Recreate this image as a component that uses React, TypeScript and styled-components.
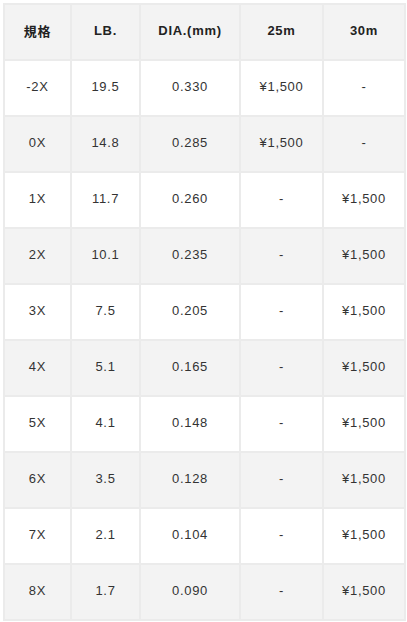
import styled, { createGlobalStyle } from 'styled-components';

const Global = createGlobalStyle`
  body {
    margin: 0;
    background: #fff;
    font-family: 'Liberation Sans', Arial, 'Noto Sans CJK JP', sans-serif;
  }
`;

const Wrapper = styled.div`
  padding: 3px;
`;

const Table = styled.table`
  border-collapse: separate;
  border-spacing: 2px;
  background-color: #ebebeb;
  table-layout: fixed;
  width: 403px;
  color: #333;
  font-size: 13px;
  letter-spacing: 0.7px;
`;

const Row = styled.tr<{ $shade: boolean }>`
  background-color: ${(p) => (p.$shade ? '#f3f3f3' : '#ffffff')};
`;

const HeadCell = styled.th`
  height: 50px;
  padding: 0 0 4px;
  text-align: center;
  vertical-align: middle;
  font-weight: bold;
  color: #222;
`;

const Cell = styled.td`
  height: 50px;
  padding: 0 0 4px;
  text-align: center;
  vertical-align: middle;
`;

const widths = [65, 67, 98, 81, 80];
const heads = ['規格', 'LB.', 'DIA.(mm)', '25m', '30m'];

const rows = [
  ['-2X', '19.5', '0.330', '¥1,500', '-'],
  ['0X', '14.8', '0.285', '¥1,500', '-'],
  ['1X', '11.7', '0.260', '-', '¥1,500'],
  ['2X', '10.1', '0.235', '-', '¥1,500'],
  ['3X', '7.5', '0.205', '-', '¥1,500'],
  ['4X', '5.1', '0.165', '-', '¥1,500'],
  ['5X', '4.1', '0.148', '-', '¥1,500'],
  ['6X', '3.5', '0.128', '-', '¥1,500'],
  ['7X', '2.1', '0.104', '-', '¥1,500'],
  ['8X', '1.7', '0.090', '-', '¥1,500'],
];

function App() {
  return (
    <Wrapper>
      <Global />
      <Table>
        <colgroup>
          {widths.map((w, i) => (
            <col key={i} style={{ width: w }} />
          ))}
        </colgroup>
        <thead>
          <Row $shade={true}>
            {heads.map((h) => (
              <HeadCell key={h}>{h}</HeadCell>
            ))}
          </Row>
        </thead>
        <tbody>
          {rows.map((r, i) => (
            <Row key={r[0]} $shade={i % 2 == 1}>
              {r.map((c, j) => (
                <Cell key={j}>{c}</Cell>
              ))}
            </Row>
          ))}
        </tbody>
      </Table>
    </Wrapper>
  );
}
export default App;
